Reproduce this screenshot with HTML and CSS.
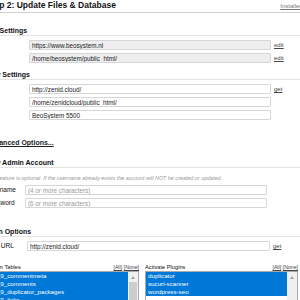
FILE: index.html
```html
<!DOCTYPE html>
<html>
<head>
<meta charset="utf-8">
<link rel="stylesheet" href="styles.css">
</head>
<body>
<div class="page">
  <div class="hdr-main">
    <span class="title">Step 2: Update Files &amp; Database</span>
    <a class="log" href="#">Installer Log</a>
  </div>

  <div class="hdr-sub first">Old Settings</div>
  <div class="rows rows-settings">
    <div class="row"><span class="lbl">URL</span><input class="inp ro" value="https://www.beosystem.nl" readonly><a class="act" href="#">edit</a></div>
    <div class="row"><span class="lbl">Path</span><input class="inp ro" value="/home/beosystem/public_html/" readonly><a class="act" href="#">edit</a></div>
  </div>

  <div class="hdr-sub">New Settings</div>
  <div class="rows rows-settings">
    <div class="row"><span class="lbl">URL</span><input class="inp" value="http://zenid.cloud/"><a class="act" href="#">get</a></div>
    <div class="row"><span class="lbl">Path</span><input class="inp" value="/home/zenidcloud/public_html/"></div>
    <div class="row"><span class="lbl">Title</span><input class="inp" value="BeoSystem 5500"></div>
  </div>

  <a class="adv" href="#">Advanced Options...</a>

  <div class="hdr-sub admin">New Admin Account</div>
  <div class="note">This feature is optional. If the username already exists the account will NOT be created or updated.</div>
  <div class="rows rows-admin">
    <div class="row"><span class="lbl">Username</span><input class="inp" placeholder="(4 or more characters)"></div>
    <div class="row"><span class="lbl">Password</span><input class="inp" placeholder="(6 or more characters)"></div>
  </div>

  <div class="hdr-sub scan">Scan Options</div>
  <div class="rows rows-scan">
    <div class="row"><span class="lbl">New URL</span><input class="inp" value="http://zenid.cloud/"><a class="act" href="#">get</a></div>
  </div>

  <div class="lists">
    <div class="col">
      <div class="col-hdr"><span class="tbl-lbl">Scan Tables</span><span class="allnone"><a href="#">[All]</a> <a href="#">[None]</a></span></div>
      <div class="listbox">
        <div class="items">
          <div class="item sel">wp_9_commentmeta</div>
          <div class="item sel">wp_9_comments</div>
          <div class="item sel">wp_9_duplicator_packages</div>
          <div class="item sel">wp_9_links</div>
        </div>
        <div class="sbar"><div class="sbtn"><span class="tri"></span></div><div class="thumb"></div></div>
      </div>
    </div>
    <div class="col">
      <div class="col-hdr"><span>Activate Plugins</span><span class="allnone"><a href="#">[All]</a> <a href="#">[None]</a></span></div>
      <div class="listbox">
        <div class="items">
          <div class="item sel">duplicator</div>
          <div class="item sel">sucuri-scanner</div>
          <div class="item sel">wordpress-seo</div>
          <div class="item"></div>
        </div>
        <div class="sbar"><div class="sbtn"><span class="tri"></span></div></div>
      </div>
    </div>
  </div>
</div>
</body>
</html>
```

FILE: styles.css
```css
html, body {
  margin: 0;
  padding: 0;
  background: #ffffff;
  overflow: hidden;
}
body {
  font-family: "Liberation Sans", Arial, sans-serif;
  color: #000;
  width: 300px;
  height: 300px;
}
.page {
  width: 327px;
  margin-left: -14px;
}
.hdr-main {
  display: flex;
  justify-content: space-between;
  align-items: baseline;
  height: 12px;
  border-bottom: 1px solid #cfcfcf;
}
.title {
  font-size: 8.5px;
  font-weight: bold;
  line-height: 11px;
  color: #111;
}
.log {
  font-size: 6px;
  color: #777;
  text-decoration: underline;
}
.hdr-sub {
  font-size: 7px;
  font-weight: bold;
  line-height: 8px;
  height: 8px;
  border-bottom: 1px solid #e3e3e3;
  margin-top: 8px;
  color: #111;
}
.hdr-sub.first { margin-top: 14px; }
.hdr-sub.admin { margin-top: 12px; }
.hdr-sub.scan { margin-top: 20px; }
.rows {
  display: flex;
  flex-direction: column;
  gap: 3px;
  margin-top: 4px;
}
.rows-admin { margin-top: 3px; }
.row {
  display: flex;
  align-items: center;
  height: 10px;
}
.lbl {
  font-size: 6.5px;
  line-height: 10px;
  color: #111;
  flex: none;
}
.rows-settings .lbl { width: 43px; }
.rows-admin .lbl { width: 39px; }
.rows-scan .lbl { width: 41px; }
.inp {
  box-sizing: border-box;
  height: 10px;
  width: 242px;
  margin: 0;
  padding: 0 2px;
  border: 1px solid #d6d6d6;
  border-radius: 1px;
  font-family: "Liberation Sans", Arial, sans-serif;
  font-size: 6.3px;
  color: #222;
  background: #fff;
  outline: none;
}
.rows-scan .inp { width: 243px; }
.inp.ro { background: #eeeeee; }
.inp::placeholder { color: #999; }
.act {
  margin-left: 3px;
  font-size: 6px;
  color: #444;
  text-decoration: underline;
}
.adv {
  display: block;
  margin-top: 19px;
  font-size: 7px;
  font-weight: bold;
  line-height: 8px;
  color: #222;
  text-decoration: underline;
}
.note {
  margin-top: 7px;
  font-size: 5.4px;
  line-height: 7px;
  font-style: italic;
  color: #999;
  white-space: nowrap;
}
.lists {
  width: 312px;
  margin-top: 13px;
  display: grid;
  grid-template-columns: 1fr 1fr;
  column-gap: 6px;
}
.col-hdr {
  display: flex;
  justify-content: space-between;
  align-items: baseline;
  font-size: 5.7px;
  line-height: 7px;
  color: #111;
}
.tbl-lbl { padding-left: 4px; }
.allnone a {
  color: #444;
  font-size: 5.2px;
  text-decoration: underline;
}
.listbox {
  display: flex;
  border: 1px solid #a9a9a9;
  height: 40px;
  background: #fff;
}
.items {
  flex: 1;
  min-width: 0;
}
.item {
  height: 8px;
  line-height: 8px;
  font-size: 6.2px;
  padding-left: 2px;
  white-space: nowrap;
  color: #000;
}
.item.sel {
  background: #0078d7;
  color: #fff;
}
.sbar {
  width: 10px;
  flex: none;
  background: #f0f0f0;
  display: flex;
  flex-direction: column;
}
.sbtn {
  height: 10px;
  display: flex;
  align-items: center;
  justify-content: center;
}
.tri {
  width: 0;
  height: 0;
  border-left: 2.5px solid transparent;
  border-right: 2.5px solid transparent;
  border-bottom: 3px solid #a3a3a3;
}
.thumb {
  margin: 0 1px;
  height: 30px;
  background: #cdcdcd;
}
```
